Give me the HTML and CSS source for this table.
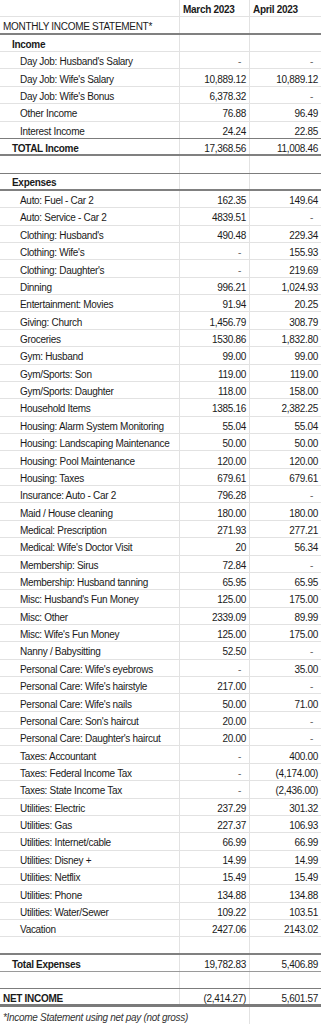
FILE: index.html
```html
<!DOCTYPE html>
<html lang="en">
<head>
  <meta charset="UTF-8">
  <meta name="viewport" content="width=device-width, initial-scale=1.0">
  <title>Monthly Income Statement</title>
  <link rel="stylesheet" href="styles.css">
</head>
<body>
  <div class="sheet">
    <div class="row head"><span class="c"></span><span class="c bold">March 2023</span><span class="c bold">April 2023</span></div>
    <div class="row line-thick"><span class="c">MONTHLY INCOME STATEMENT*</span><span class="c"></span><span class="c"></span></div>

    <!-- Income -->
    <div class="row"><span class="c bold l1">Income</span><span class="c"></span><span class="c"></span></div>
    <div class="row"><span class="c l2">Day Job: Husband's Salary</span><span class="c num dash">-</span><span class="c num dash">-</span></div>
    <div class="row"><span class="c l2">Day Job: Wife's Salary</span><span class="c num">10,889.12</span><span class="c num">10,889.12</span></div>
    <div class="row"><span class="c l2">Day Job: Wife's Bonus</span><span class="c num">6,378.32</span><span class="c num dash">-</span></div>
    <div class="row"><span class="c l2">Other Income</span><span class="c num">76.88</span><span class="c num">96.49</span></div>
    <div class="row line-dark"><span class="c l2">Interest Income</span><span class="c num">24.24</span><span class="c num">22.85</span></div>
    <div class="row line-thick"><span class="c bold l1">TOTAL Income</span><span class="c num">17,368.56</span><span class="c num">11,008.46</span></div>
    <div class="row line-dark"><span class="c"></span><span class="c"></span><span class="c"></span></div>

    <!-- Expenses -->
    <div class="row line-thick"><span class="c bold l1">Expenses</span><span class="c"></span><span class="c"></span></div>
    <div class="row"><span class="c l2">Auto: Fuel - Car 2</span><span class="c num">162.35</span><span class="c num">149.64</span></div>
    <div class="row"><span class="c l2">Auto: Service - Car 2</span><span class="c num">4839.51</span><span class="c num dash">-</span></div>
    <div class="row"><span class="c l2">Clothing: Husband's</span><span class="c num">490.48</span><span class="c num">229.34</span></div>
    <div class="row"><span class="c l2">Clothing: Wife's</span><span class="c num dash">-</span><span class="c num">155.93</span></div>
    <div class="row"><span class="c l2">Clothing: Daughter's</span><span class="c num dash">-</span><span class="c num">219.69</span></div>
    <div class="row"><span class="c l2">Dinning</span><span class="c num">996.21</span><span class="c num">1,024.93</span></div>
    <div class="row"><span class="c l2">Entertainment: Movies</span><span class="c num">91.94</span><span class="c num">20.25</span></div>
    <div class="row"><span class="c l2">Giving: Church</span><span class="c num">1,456.79</span><span class="c num">308.79</span></div>
    <div class="row"><span class="c l2">Groceries</span><span class="c num">1530.86</span><span class="c num">1,832.80</span></div>
    <div class="row"><span class="c l2">Gym: Husband</span><span class="c num">99.00</span><span class="c num">99.00</span></div>
    <div class="row"><span class="c l2">Gym/Sports: Son</span><span class="c num">119.00</span><span class="c num">119.00</span></div>
    <div class="row"><span class="c l2">Gym/Sports: Daughter</span><span class="c num">118.00</span><span class="c num">158.00</span></div>
    <div class="row"><span class="c l2">Household Items</span><span class="c num">1385.16</span><span class="c num">2,382.25</span></div>
    <div class="row"><span class="c l2">Housing: Alarm System Monitoring</span><span class="c num">55.04</span><span class="c num">55.04</span></div>
    <div class="row"><span class="c l2">Housing: Landscaping Maintenance</span><span class="c num">50.00</span><span class="c num">50.00</span></div>
    <div class="row"><span class="c l2">Housing: Pool Maintenance</span><span class="c num">120.00</span><span class="c num">120.00</span></div>
    <div class="row"><span class="c l2">Housing: Taxes</span><span class="c num">679.61</span><span class="c num">679.61</span></div>
    <div class="row"><span class="c l2">Insurance: Auto - Car 2</span><span class="c num">796.28</span><span class="c num dash">-</span></div>
    <div class="row"><span class="c l2">Maid / House cleaning</span><span class="c num">180.00</span><span class="c num">180.00</span></div>
    <div class="row"><span class="c l2">Medical: Prescription</span><span class="c num">271.93</span><span class="c num">277.21</span></div>
    <div class="row"><span class="c l2">Medical: Wife's Doctor Visit</span><span class="c num">20</span><span class="c num">56.34</span></div>
    <div class="row"><span class="c l2">Membership: Sirus</span><span class="c num">72.84</span><span class="c num dash">-</span></div>
    <div class="row"><span class="c l2">Membership: Husband tanning</span><span class="c num">65.95</span><span class="c num">65.95</span></div>
    <div class="row"><span class="c l2">Misc: Husband's Fun Money</span><span class="c num">125.00</span><span class="c num">175.00</span></div>
    <div class="row"><span class="c l2">Misc: Other</span><span class="c num">2339.09</span><span class="c num">89.99</span></div>
    <div class="row"><span class="c l2">Misc: Wife's Fun Money</span><span class="c num">125.00</span><span class="c num">175.00</span></div>
    <div class="row"><span class="c l2">Nanny / Babysitting</span><span class="c num">52.50</span><span class="c num dash">-</span></div>
    <div class="row"><span class="c l2">Personal Care: Wife's eyebrows</span><span class="c num dash">-</span><span class="c num">35.00</span></div>
    <div class="row"><span class="c l2">Personal Care: Wife's hairstyle</span><span class="c num">217.00</span><span class="c num dash">-</span></div>
    <div class="row"><span class="c l2">Personal Care: Wife's nails</span><span class="c num">50.00</span><span class="c num">71.00</span></div>
    <div class="row"><span class="c l2">Personal Care: Son's haircut</span><span class="c num">20.00</span><span class="c num dash">-</span></div>
    <div class="row"><span class="c l2">Personal Care: Daughter's haircut</span><span class="c num">20.00</span><span class="c num dash">-</span></div>
    <div class="row"><span class="c l2">Taxes: Accountant</span><span class="c num dash">-</span><span class="c num">400.00</span></div>
    <div class="row"><span class="c l2">Taxes: Federal Income Tax</span><span class="c num dash">-</span><span class="c num">(4,174.00)</span></div>
    <div class="row"><span class="c l2">Taxes: State Income Tax</span><span class="c num dash">-</span><span class="c num">(2,436.00)</span></div>
    <div class="row"><span class="c l2">Utilities: Electric</span><span class="c num">237.29</span><span class="c num">301.32</span></div>
    <div class="row"><span class="c l2">Utilities: Gas</span><span class="c num">227.37</span><span class="c num">106.93</span></div>
    <div class="row"><span class="c l2">Utilities: Internet/cable</span><span class="c num">66.99</span><span class="c num">66.99</span></div>
    <div class="row"><span class="c l2">Utilities: Disney +</span><span class="c num">14.99</span><span class="c num">14.99</span></div>
    <div class="row"><span class="c l2">Utilities: Netflix</span><span class="c num">15.49</span><span class="c num">15.49</span></div>
    <div class="row"><span class="c l2">Utilities: Phone</span><span class="c num">134.88</span><span class="c num">134.88</span></div>
    <div class="row"><span class="c l2">Utilities: Water/Sewer</span><span class="c num">109.22</span><span class="c num">103.51</span></div>
    <div class="row"><span class="c l2">Vacation</span><span class="c num">2427.06</span><span class="c num">2143.02</span></div>
    <div class="row line-thick"><span class="c"></span><span class="c"></span><span class="c"></span></div>
    <div class="row line-mid"><span class="c bold l1">Total Expenses</span><span class="c num">19,782.83</span><span class="c num">5,406.89</span></div>
    <div class="row line-dark"><span class="c"></span><span class="c"></span><span class="c"></span></div>

    <!-- Net -->
    <div class="row line-double"><span class="c bold">NET INCOME</span><span class="c num">(2,414.27)</span><span class="c num">5,601.57</span></div>
    <div class="row note"><span class="c">*Income Statement using net pay (not gross)</span><span class="c"></span></div>
  </div>
</body>
</html>
```

FILE: styles.css
```css
* {
  margin: 0;
  padding: 0;
  box-sizing: border-box;
}
body {
  font-family: "Liberation Sans", Arial, sans-serif;
  background-color: #ffffff;
  color: #1a1a1a;
}

.sheet {
  width: 321px;
  font-size: 10px;
  letter-spacing: -0.3px;
}

.row {
  display: grid;
  grid-template-columns: 180px 70px 71px;
  height: 17.36px;
  border-bottom: 1px solid #e2e2e2;
}
.row.line-dark {
  border-bottom: 1px solid #7c7c7c;
}
.row.line-mid {
  border-bottom: 1px solid #9a9a9a;
}
.row.line-thick {
  border-bottom: 2px solid #808080;
}
.row.line-double {
  border-bottom: 3px solid #7a7a7a;
}
.row.note {
  grid-template-columns: 250px 71px;
  border-bottom: none;
}
.row.note .c:first-child {
  font-style: italic;
  color: #333;
}

.c {
  display: flex;
  align-items: center;
  padding: 3px 3px 0;
  white-space: nowrap;
  overflow: visible;
  border-right: 1px solid #e2e2e2;
}
.c:last-child {
  border-right: none;
}
.bold {
  font-weight: bold;
}
.l1 {
  padding-left: 12px;
}
.l2 {
  padding-left: 20px;
}
.num {
  justify-content: flex-end;
}
.num.dash {
  padding-right: 8px;
  color: #666;
}
```
